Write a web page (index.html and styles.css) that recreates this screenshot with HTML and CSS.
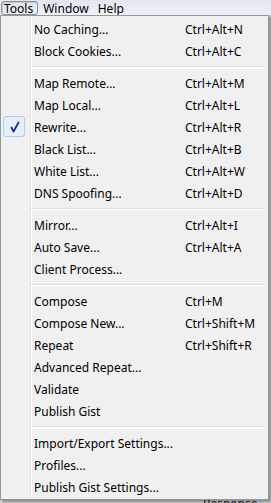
FILE: index.html
```html
<!DOCTYPE html>
<html lang="en">
<head>
    <meta charset="UTF-8">
    <meta name="viewport" content="width=device-width, initial-scale=1.0">
    <title>Tools menu</title>
    <link rel="stylesheet" href="styles.css">
</head>
<body>
    <div class="menubar">
        <span class="menubar-item active">Tools</span>
        <span class="menubar-item">Window</span>
        <span class="menubar-item">Help</span>
    </div>

    <div class="workspace">
        <div class="pane-label">Response</div>
    </div>

    <div class="menu">
        <div class="menu-item"><span class="label">No Caching...</span><span class="key">Ctrl+Alt+N</span></div>
        <div class="menu-item"><span class="label">Block Cookies...</span><span class="key">Ctrl+Alt+C</span></div>
        <div class="separator"></div>
        <div class="menu-item"><span class="label">Map Remote...</span><span class="key">Ctrl+Alt+M</span></div>
        <div class="menu-item"><span class="label">Map Local...</span><span class="key">Ctrl+Alt+L</span></div>
        <div class="menu-item checked">
            <span class="check">
                <svg width="22" height="21" viewBox="0 0 22 21">
                    <path d="M8.5 11.5 L10.5 15.5 L15.5 6.5" fill="none" stroke="#1f2b8f" stroke-width="1.8" stroke-linecap="round" stroke-linejoin="round"/>
                </svg>
            </span>
            <span class="label">Rewrite...</span><span class="key">Ctrl+Alt+R</span>
        </div>
        <div class="menu-item"><span class="label">Black List...</span><span class="key">Ctrl+Alt+B</span></div>
        <div class="menu-item"><span class="label">White List...</span><span class="key">Ctrl+Alt+W</span></div>
        <div class="menu-item"><span class="label">DNS Spoofing...</span><span class="key">Ctrl+Alt+D</span></div>
        <div class="separator"></div>
        <div class="menu-item"><span class="label">Mirror...</span><span class="key">Ctrl+Alt+I</span></div>
        <div class="menu-item"><span class="label">Auto Save...</span><span class="key">Ctrl+Alt+A</span></div>
        <div class="menu-item"><span class="label">Client Process...</span></div>
        <div class="separator"></div>
        <div class="menu-item"><span class="label">Compose</span><span class="key">Ctrl+M</span></div>
        <div class="menu-item"><span class="label">Compose New...</span><span class="key">Ctrl+Shift+M</span></div>
        <div class="menu-item"><span class="label">Repeat</span><span class="key">Ctrl+Shift+R</span></div>
        <div class="menu-item"><span class="label">Advanced Repeat...</span></div>
        <div class="menu-item"><span class="label">Validate</span></div>
        <div class="menu-item"><span class="label">Publish Gist</span></div>
        <div class="separator"></div>
        <div class="menu-item"><span class="label">Import/Export Settings...</span></div>
        <div class="menu-item"><span class="label">Profiles...</span></div>
        <div class="menu-item"><span class="label">Publish Gist Settings...</span></div>
    </div>
</body>
</html>
```

FILE: styles.css
```css
html, body {
    margin: 0;
    padding: 0;
    height: 100%;
    overflow: hidden;
}
body {
    font-family: "Noto Sans", "Liberation Sans", sans-serif;
    font-size: 12px;
    color: #000;
    background: #f0f0f0;
    position: relative;
}
.menubar {
    height: 15px;
    display: flex;
    align-items: center;
    background: linear-gradient(#e2e6f1, #eef1f8);
    padding-left: 1px;
}
.menubar-item {
    height: 14px;
    line-height: 13px;
    padding: 0 3px;
    margin-right: 1px;
    box-sizing: border-box;
    border: 1px solid transparent;
}
.menubar-item.active {
    padding: 0 4px 0 2px;
    border-color: #8a8f99;
    border-radius: 3px;
    background: linear-gradient(#dfe3ec, #eceff5);
    box-shadow: inset 1px 1px 0 #c4c8d0;
}
.workspace {
    height: 488px;
    background: #d4d4d4;
    display: flex;
    align-items: flex-end;
    padding-left: 203px;
}
.pane-label {
    line-height: 14px;
    margin-bottom: -8px;
    font-size: 12px;
    color: #222;
}
.menu {
    position: absolute;
    top: 15px;
    left: 0;
    width: 269px;
    box-sizing: border-box;
    background: #f0f0f0;
    border: 1px solid #979797;
    padding: 2px 0 1px 0;
    box-shadow: 2px 2px 2px rgba(0, 0, 0, 0.35);
    background-image: linear-gradient(to right, transparent 29px, #e2e3e3 29px, #e2e3e3 30px, #ffffff 30px, #ffffff 31px, transparent 31px);
}
.menu-item {
    height: 22px;
    display: flex;
    align-items: center;
    position: relative;
    padding-left: 33px;
}
.menu-item .label {
    width: 151px;
    white-space: nowrap;
}
.menu-item .key {
    white-space: nowrap;
}
.check {
    position: absolute;
    left: 2px;
    top: 0;
    width: 22px;
    height: 21px;
    box-sizing: border-box;
    border: 1px solid #aeccf0;
    border-radius: 3px;
    background: #e6eefa;
}
.check svg {
    position: absolute;
    left: -1px;
    top: -1px;
}
.separator {
    height: 10px;
    margin-left: 30px;
    margin-right: 2px;
    background: linear-gradient(transparent 4px, #e0e0e0 4px, #e0e0e0 5px, #ffffff 5px, #ffffff 6px, transparent 6px);
}
```
